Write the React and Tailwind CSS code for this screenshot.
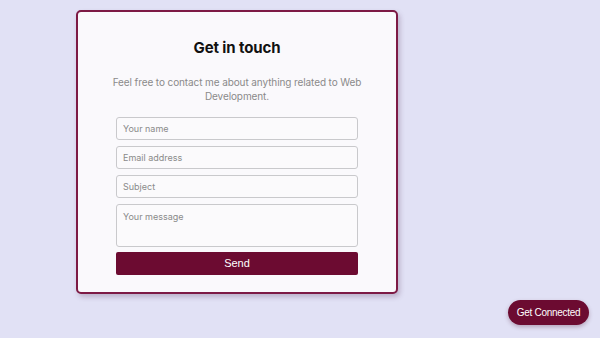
export default function App() {
  const field = "h-[23px] w-full rounded-[3px] border border-[#c9c9cc] bg-[#fbfafc] px-[6px] text-[9px] text-[#333] placeholder:text-[#8a8a8a] outline-none";
  return <div className="relative h-[338px] w-[600px] overflow-hidden bg-[#e1e1f5] font-['Inter',sans-serif]">
    <div className="ml-[76px] mt-[10px] flex h-[284px] w-[322px] flex-col items-center rounded-[5px] border-2 border-[#7d1a45] bg-[#faf9fc] shadow-[2px_3px_5px_rgba(80,40,80,0.25)]">
      <h1 className="mt-[25px] text-[15px] font-bold tracking-[-0.1px] text-[#111]">Get in touch</h1>
      <p className="mt-[15px] w-[252px] text-center text-[10px] leading-[14px] tracking-[-0.1px] text-[#8a8a8a]">Feel free to contact me about anything related to Web Development.</p>
      <form className="mt-[14px] flex w-[242px] flex-col gap-[6px]" onSubmit={(e) => e.preventDefault()}>
        <input className={field} placeholder="Your name" />
        <input className={field} placeholder="Email address" />
        <input className={field} placeholder="Subject" />
        <textarea className="h-[43px] w-full resize-none rounded-[3px] border border-[#c9c9cc] bg-[#fbfafc] px-[6px] py-[5px] text-[9px] text-[#333] placeholder:text-[#8a8a8a] outline-none" placeholder="Your message" />
        <button className="mt-[-1px] h-[23px] w-full rounded-[2px] bg-[#6c0b31] font-['Liberation_Sans',sans-serif] text-[11px] text-white">Send</button>
      </form>
    </div>
    <button className="absolute left-[508px] top-[300px] h-[25px] w-[81px] rounded-full bg-[#6c0b31] font-['Liberation_Sans',sans-serif] text-[10px] tracking-[-0.3px] text-white shadow-[0_2px_4px_rgba(80,20,50,0.3)]">Get Connected</button>
  </div>;
}
